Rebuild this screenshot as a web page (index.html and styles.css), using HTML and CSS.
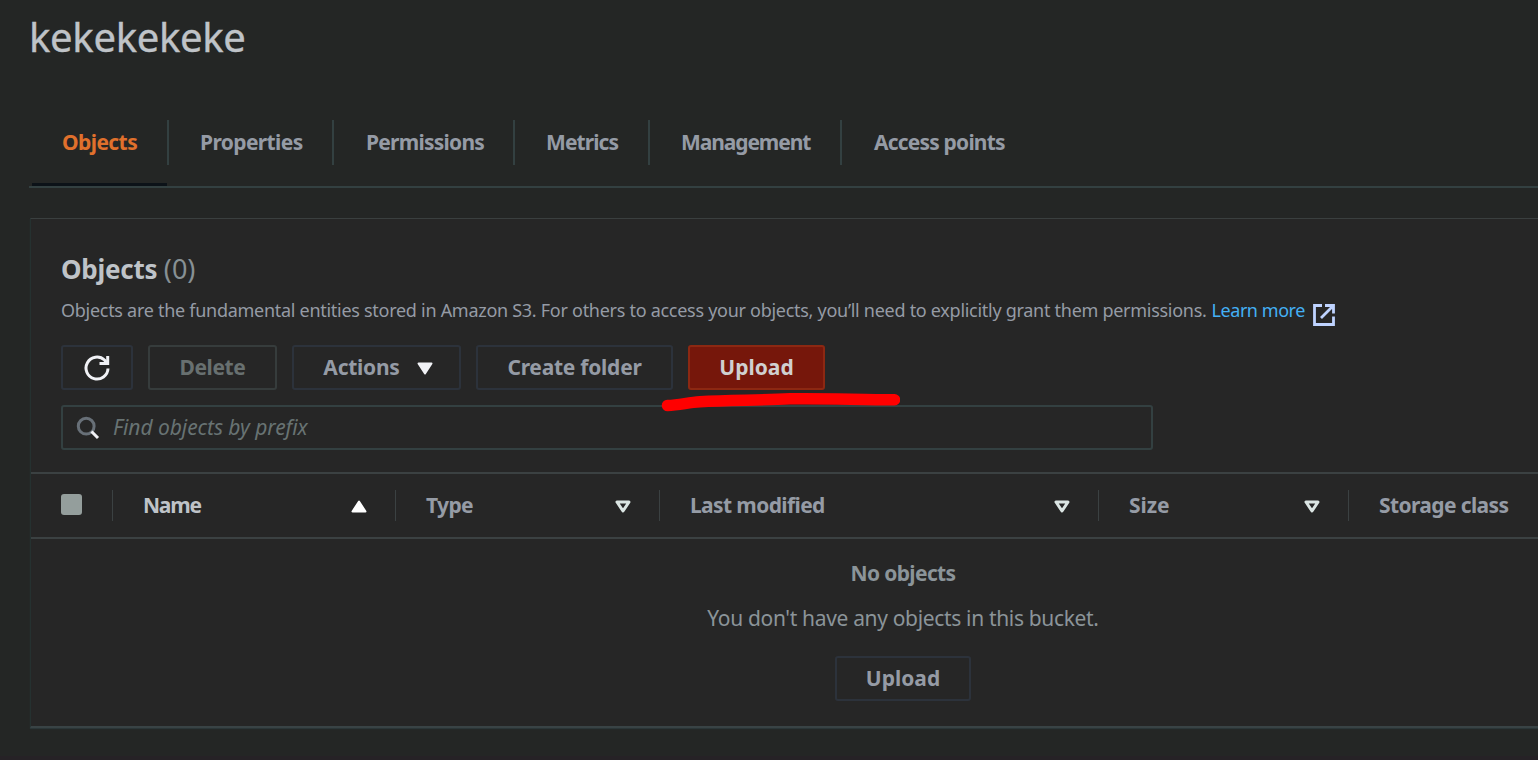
FILE: index.html
```html
<!DOCTYPE html>
<html lang="en">
<head>
<meta charset="utf-8">
<title>kekekekeke - S3 bucket</title>
<link rel="stylesheet" href="styles.css">
</head>
<body>
<main class="page">
  <h1 class="bucket-name">kekekekeke</h1>

  <nav class="tabs">
    <a class="tab tab-objects active"><span>Objects</span></a>
    <a class="tab tab-properties"><span>Properties</span></a>
    <a class="tab tab-permissions"><span>Permissions</span></a>
    <a class="tab tab-metrics"><span>Metrics</span></a>
    <a class="tab tab-management"><span>Management</span></a>
    <a class="tab tab-access"><span>Access points</span></a>
  </nav>

  <section class="panel">
    <header class="panel-head">
      <h2 class="panel-title">Objects <span class="count">(0)</span></h2>
      <p class="description"><span>Objects are the fundamental entities stored in Amazon S3. For others to access your objects, you’ll need to explicitly grant them permissions.</span><a class="learn-more">Learn more</a><svg class="external" width="22" height="22" viewBox="0 0 22 22"><path d="M9 1.500H1.500V20.500H20.500V12.500M12 1.500H20.500V9.500M20 2L8 14" fill="none" stroke="#bfd3ff" stroke-width="2.800"/></svg></p>
      <div class="toolbar">
        <button class="btn btn-refresh"><svg width="26" height="26" viewBox="0 0 26 26"><path d="M24 13.500A11 11 0 1 1 20.500 5L23 8" fill="none" stroke="#f1f2f6" stroke-width="3"/><path d="M23.700 1V8.500H15.500" fill="none" stroke="#f1f2f6" stroke-width="3"/></svg></button>
        <button class="btn btn-delete">Delete</button>
        <button class="btn btn-actions">Actions<svg width="16" height="13" viewBox="0 0 16 13"><path d="M1.500 1.500H14.500L8 11.500Z" fill="#f1f2f6" stroke="#f1f2f6" stroke-width="2" stroke-linejoin="round"/></svg></button>
        <button class="btn btn-create">Create folder</button>
        <button class="btn btn-upload primary">Upload</button>
        <svg class="marker" width="240" height="22" viewBox="0 0 240 22"><path d="M7.500 13.500C20 13 28 10.500 40 9.800C70 8 100 8.500 130 6.800C165 6.300 200 7.700 234.500 7.700" fill="none" stroke="#ff0000" stroke-width="11.500" stroke-linecap="round"/></svg>
      </div>
      <div class="search">
        <svg width="24" height="24" viewBox="0 0 24 24"><circle cx="10.200" cy="10.200" r="7.900" fill="none" stroke="#687078" stroke-width="3"/><path d="M15.500 15.500L22 22" stroke="#f1f2f6" stroke-width="3"/></svg>
        <span>Find objects by prefix</span>
      </div>
    </header>

    <div class="columns">
      <div class="col col-check"><i class="checkbox"></i></div>
      <div class="col col-name"><span>Name</span><svg width="16" height="13" viewBox="0 0 16 13"><path d="M1.500 11.500H14.500L8 1.500Z" fill="#fff" stroke="#fff" stroke-width="2" stroke-linejoin="round"/></svg></div>
      <div class="col col-type"><span>Type</span><svg width="16" height="13" viewBox="0 0 16 13"><path d="M2 2H14L8 11Z" fill="none" stroke="#dbe5e3" stroke-width="3" stroke-linejoin="round"/></svg></div>
      <div class="col col-modified"><span>Last modified</span><svg width="16" height="13" viewBox="0 0 16 13"><path d="M2 2H14L8 11Z" fill="none" stroke="#dbe5e3" stroke-width="3" stroke-linejoin="round"/></svg></div>
      <div class="col col-size"><span>Size</span><svg width="16" height="13" viewBox="0 0 16 13"><path d="M2 2H14L8 11Z" fill="none" stroke="#dbe5e3" stroke-width="3" stroke-linejoin="round"/></svg></div>
      <div class="col col-storage"><span>Storage class</span></div>
    </div>

    <div class="empty">
      <strong class="empty-title">No objects</strong>
      <p class="empty-text">You don't have any objects in this bucket.</p>
      <button class="btn btn-empty">Upload</button>
    </div>
  </section>
</main>
</body>
</html>
```
FILE: styles.css
```css
* { box-sizing: border-box; }

body {
  margin: 0;
  height: 760px;
  overflow: hidden;
  background: #242625;
  color: #959ba5;
  font: 21px/30px "Noto Sans", "Open Sans", sans-serif;
}

h1, h2, p { margin: 0; }

svg { display: block; flex: none; }

.page {
  height: 760px;
  padding-left: 30px;
  border-bottom: 4px solid #262226;
  overflow: hidden;
}

.bucket-name {
  height: 120px;
  padding-top: 13px;
  margin-left: -1px;
  color: #bfc3c8;
  font-size: 40px;
  line-height: 48px;
  font-weight: 400;
  letter-spacing: -0.3px;
  -webkit-text-stroke: 0.4px #bfc3c8;
}

/* Tabs */
.tabs {
  display: flex;
  height: 68px;
  margin-left: -1px;
  padding-left: 3px;
  border-bottom: 2px solid #334041;
}

.tab {
  height: 66px;
  font-weight: 700;
  white-space: nowrap;
}

.tab span {
  display: block;
  height: 45px;
  padding-left: 31px;
  line-height: 45px;
  border-right: 2px solid #334041;
}

.tab-objects { width: 137px; letter-spacing: -0.58px; }
.tab-objects span { padding-left: 30px; }
.tab-properties { width: 165px; letter-spacing: -0.62px; }
.tab-permissions { width: 181px; letter-spacing: -0.75px; }
.tab-permissions span { padding-left: 32px; }
.tab-metrics { width: 135px; letter-spacing: -0.9px; }
.tab-management { width: 192px; letter-spacing: -1.1px; }
.tab-access { letter-spacing: -0.81px; }
.tab-access span { border-right: 0; padding-left: 32px; }

.tab.active {
  color: #e0702c;
  background: linear-gradient(#0c1218, #0c1218) 0 100% / 135px 3px no-repeat;
}

/* Objects panel */
.panel {
  width: 1745px;
  height: 510px;
  margin-top: 30px;
  background: #262626;
  border-top: 1px solid #3a3f3f;
  border-left: 1px solid #253130;
  border-bottom: 2px solid #394345;
  box-shadow: 0 1px 1px 0 #2b3638;
}

.panel-head {
  height: 253px;
  padding: 30px 0 0 30px;
}

.panel-title {
  height: 40px;
  color: #bfc3c8;
  font-size: 26px;
  line-height: 40px;
  font-weight: 700;
  letter-spacing: -0.25px;
}

.count {
  color: #879094;
  font-weight: 400;
  font-size: 27px;
  letter-spacing: 0;
}

.description {
  display: flex;
  height: 24px;
  margin-top: 9px;
  font-size: 18px;
  line-height: 24px;
  letter-spacing: -0.282px;
  white-space: nowrap;
}

.learn-more {
  margin-left: 5px;
  color: #44b0f5;
  letter-spacing: -0.45px;
}

.external { margin: 6px 0 0 8px; }

.toolbar {
  position: relative;
  display: flex;
  margin-top: 23px;
}

.btn {
  display: flex;
  align-items: center;
  justify-content: center;
  height: 45px;
  padding: 0 0 1px;
  background: #262626;
  border: 2px solid #2c323b;
  border-radius: 3px;
  color: #959ba5;
  font: 700 21px/30px "Noto Sans", "Open Sans", sans-serif;
  white-space: nowrap;
}

.btn-refresh { width: 72px; padding-bottom: 0; }
.btn-delete { width: 129px; margin-left: 15px; color: #687070; border-color: #363c3c; letter-spacing: -0.4px; }
.btn-actions { width: 169px; margin-left: 15px; padding-left: 3px; letter-spacing: -0.26px; gap: 17px; }
.btn-actions svg { margin-top: 2px; }
.btn-create { width: 197px; margin-left: 15px; letter-spacing: -0.25px; }
.btn-upload { width: 137px; margin-left: 15px; letter-spacing: 0; }
.btn-empty { width: 136px; letter-spacing: 0; }

.primary {
  color: #d0d0d0;
  background: #76170b;
  border-color: #8c2812;
}

/* Hand-drawn underline below the upload button */
.marker {
  position: absolute;
  left: 599px;
  top: 47px;
}

.search {
  display: flex;
  align-items: center;
  width: 1092px;
  height: 45px;
  margin-top: 15px;
  padding: 0 0 1px 13px;
  border: 2px solid #334041;
  border-radius: 3px;
  color: #687373;
  font-style: italic;
  letter-spacing: -0.06px;
}

.search svg { margin-top: 2px; }
.search span { margin-left: 13px; }

/* Column headings */
.columns {
  display: flex;
  align-items: center;
  height: 67px;
  border-top: 2px solid #3b4142;
  border-bottom: 2px solid #3b4142;
  font-weight: 700;
  white-space: nowrap;
}

.col {
  display: flex;
  align-items: center;
  justify-content: space-between;
  height: 31px;
  padding: 0 28px 1px 30px;
  border-right: 1px solid #3b4142;
}

.col svg { margin-top: 2px; }

.col-check { width: 82px; }
.col-name { width: 283px; color: #bfc3c8; letter-spacing: -1.2px; }
.col-type { width: 264px; letter-spacing: -0.65px; }
.col-modified { width: 439px; letter-spacing: -0.62px; }
.col-size { width: 250px; letter-spacing: -0.1px; }
.col-storage { border-right: 0; letter-spacing: -0.62px; }

.checkbox {
  width: 21px;
  height: 21px;
  flex: none;
  margin-bottom: 1px;
  background: #949e9c;
  border-radius: 3px;
}

.empty {
  display: flex;
  flex-direction: column;
  align-items: center;
  padding-top: 19px;
  color: #8b9499;
}

.empty-title { height: 45px; letter-spacing: -0.64px; }
.empty-text { height: 53px; letter-spacing: -0.337px; }
```
